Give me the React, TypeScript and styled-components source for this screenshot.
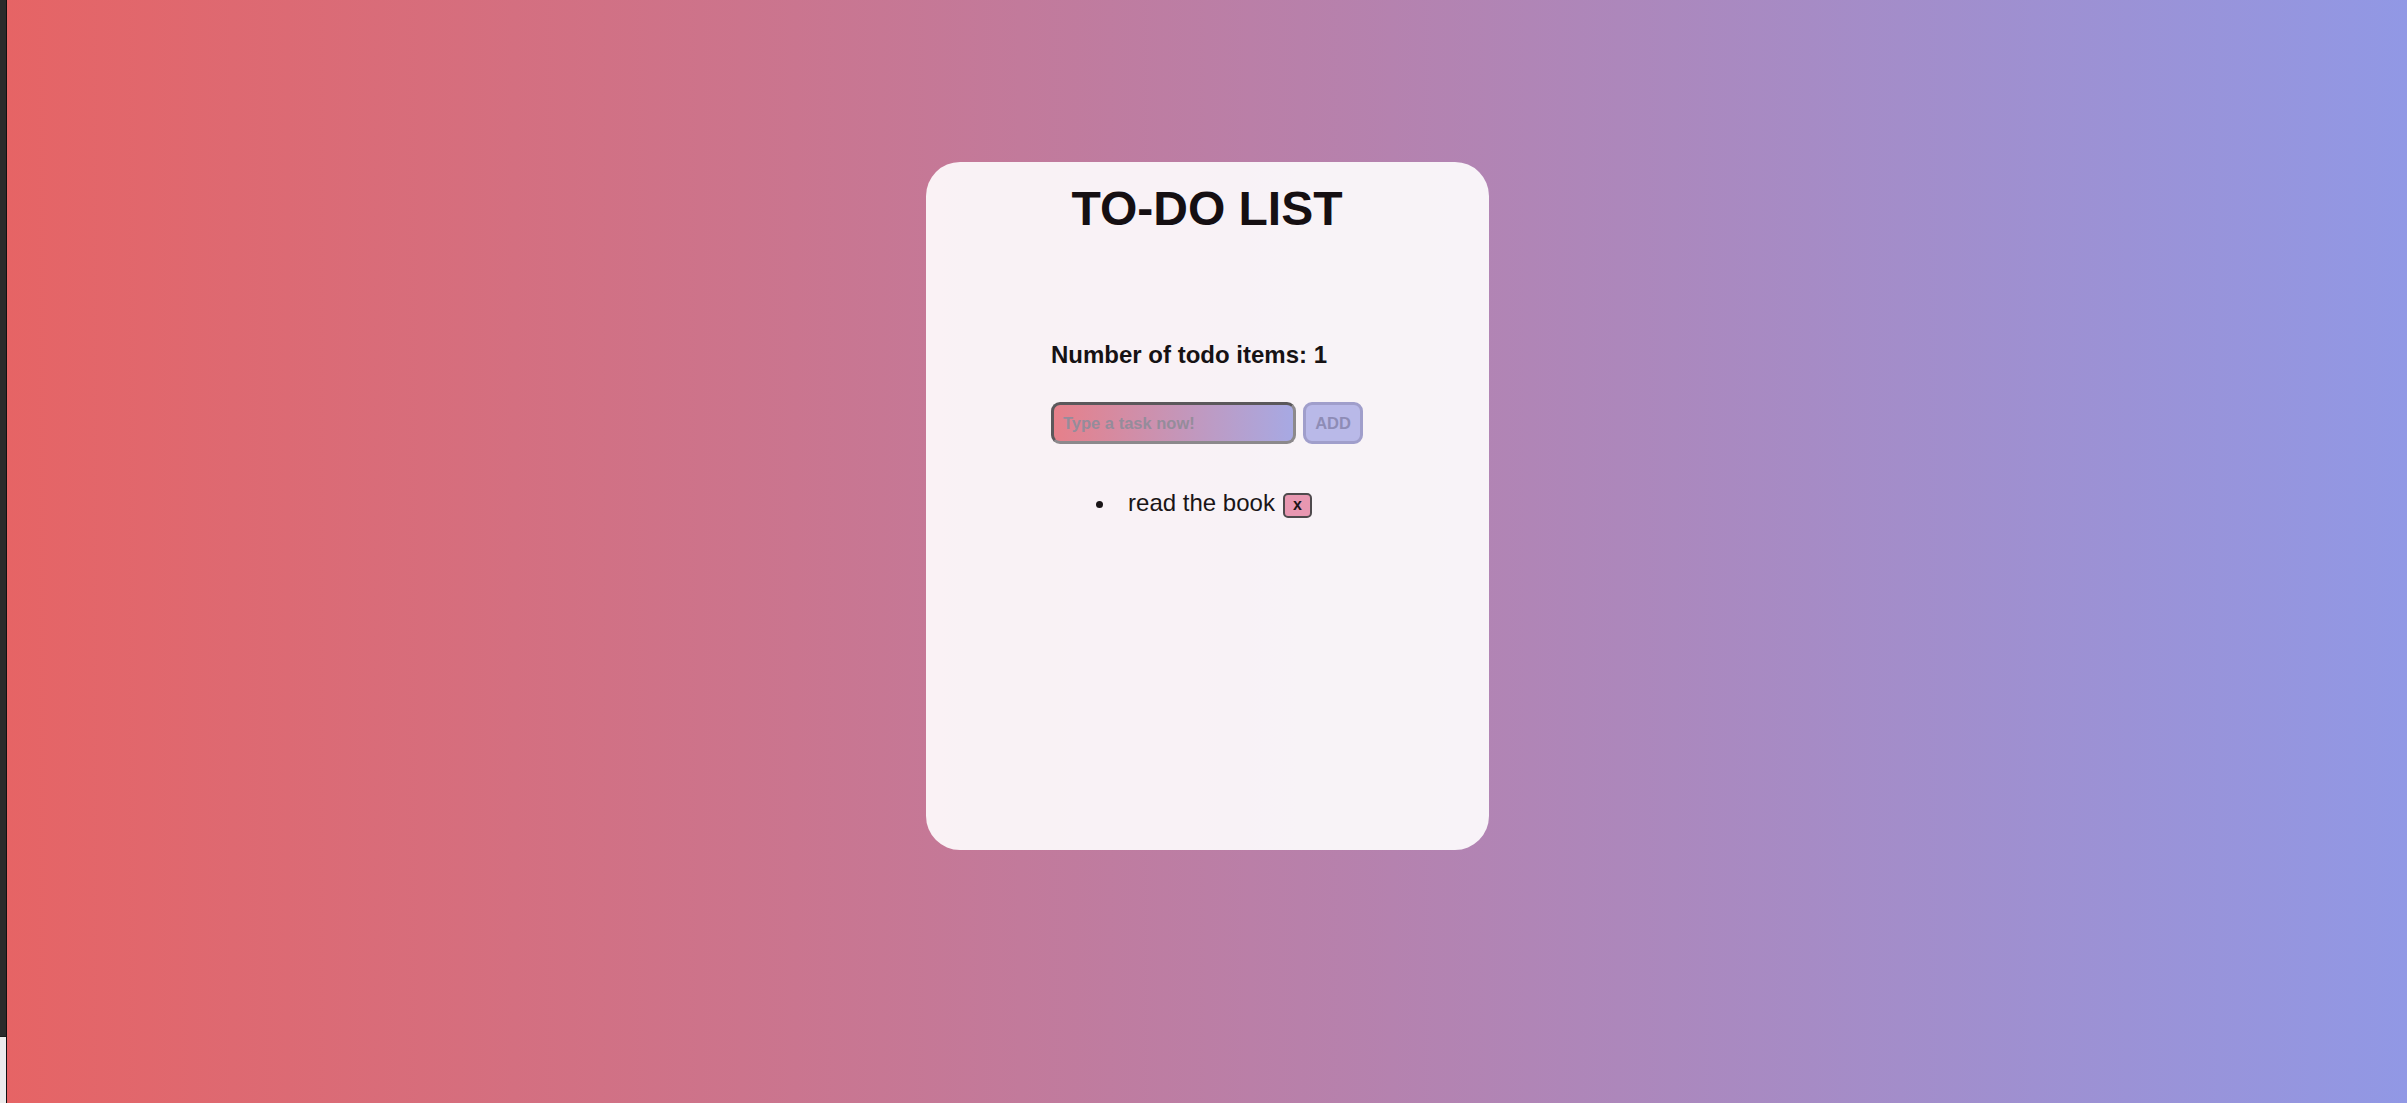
import React, { useState } from "react";
import styled, { createGlobalStyle } from "styled-components";

const GlobalStyle = createGlobalStyle`
  html, body {
    margin: 0;
    padding: 0;
    height: 100%;
  }
  body {
    font-family: "Liberation Sans", Arial, sans-serif;
    overflow: hidden;
  }
`;

const Shell = styled.div`
  display: flex;
  width: 100vw;
  height: 100vh;
`;

const SideStrip = styled.div`
  width: 6px;
  border-right: 1px solid #111;
  display: flex;
  flex-direction: column;
  flex-shrink: 0;
`;

const StripDark = styled.div`
  flex: 1;
  background: #2b2b2b;
`;

const StripLight = styled.div`
  height: 66px;
  background: #ececec;
  border-top: 1px solid #1a1a1a;
`;

const Stage = styled.main`
  flex: 1;
  background: linear-gradient(to right, #e66465, #9198e5);
  display: flex;
  justify-content: center;
  align-items: flex-start;
`;

const Card = styled.section`
  width: 563px;
  height: 688px;
  margin-top: 162px;
  box-sizing: border-box;
  padding-top: 19px;
  border-radius: 34px;
  background: rgba(255, 255, 255, 0.9);
  display: flex;
  flex-direction: column;
  align-items: center;
`;

const Title = styled.h1`
  margin: 0;
  font-size: 48px;
  font-weight: 700;
  line-height: normal;
  color: #150f12;
`;

const Panel = styled.div`
  margin-top: 105px;
  display: flex;
  flex-direction: column;
  align-items: flex-start;
`;

const Count = styled.h4`
  margin: 0;
  font-size: 24px;
  font-weight: 700;
  line-height: normal;
  color: #161214;
`;

const Form = styled.form`
  margin-top: 33px;
  display: flex;
  gap: 7px;
`;

const TaskInput = styled.input`
  width: 245px;
  height: 42px;
  box-sizing: border-box;
  border: 3px solid;
  border-color: #5b585b #8c898c #8c898c #5b585b;
  border-radius: 9px;
  padding: 0 9px;
  background: linear-gradient(to right, #e6808a, #a7a9e3);
  font-family: "Liberation Sans", Arial, sans-serif;
  font-size: 16.5px;
  font-weight: 700;
  color: #333;
  outline: none;

  &::placeholder {
    color: #958c9b;
    opacity: 1;
  }
`;

const AddButton = styled.button`
  width: 60px;
  height: 42px;
  box-sizing: border-box;
  border: 3px solid #a09ecb;
  border-radius: 9px;
  background: #b9b9e8;
  color: #8e8cb6;
  font-family: "Liberation Sans", Arial, sans-serif;
  font-size: 16.5px;
  font-weight: 700;
  padding: 0;
  cursor: pointer;
`;

const List = styled.ul`
  margin: 45px 0 0;
  padding: 0 6px 0 0;
  list-style: disc inside;
  text-align: center;
  font-size: 24px;
  color: #1a1517;
`;

const Item = styled.li`
  line-height: 28px;
`;

const RemoveButton = styled.button`
  width: 29px;
  height: 25px;
  margin-left: 8px;
  box-sizing: border-box;
  border: 2px solid #4f4a4d;
  border-radius: 5px;
  background: #e897b1;
  color: #1c1519;
  font-family: "Liberation Sans", Arial, sans-serif;
  font-size: 16px;
  font-weight: 700;
  padding: 0 0 2px;
  vertical-align: middle;
  position: relative;
  top: 1px;
  cursor: pointer;
`;

export default function App() {
  const [todos, setTodos] = useState<string[]>(["read the book"]);
  const [text, setText] = useState("");

  const add = (e: React.FormEvent) => {
    e.preventDefault();
    if (!text.trim()) return;
    setTodos([...todos, text.trim()]);
    setText("");
  };

  return (
    <>
      <GlobalStyle />
      <Shell>
        <SideStrip>
          <StripDark />
          <StripLight />
        </SideStrip>
        <Stage>
          <Card>
            <Title>TO-DO LIST</Title>
            <Panel>
              <Count>Number of todo items: {todos.length}</Count>
              <Form onSubmit={add}>
                <TaskInput
                  placeholder="Type a task now!"
                  value={text}
                  onChange={(e) => setText(e.target.value)}
                />
                <AddButton type="submit">ADD</AddButton>
              </Form>
            </Panel>
            <List>
              {todos.map((t, i) => (
                <Item key={i}>
                  {t}
                  <RemoveButton
                    type="button"
                    onClick={() => setTodos(todos.filter((_, j) => j !== i))}
                  >
                    x
                  </RemoveButton>
                </Item>
              ))}
            </List>
          </Card>
        </Stage>
      </Shell>
    </>
  );
}
